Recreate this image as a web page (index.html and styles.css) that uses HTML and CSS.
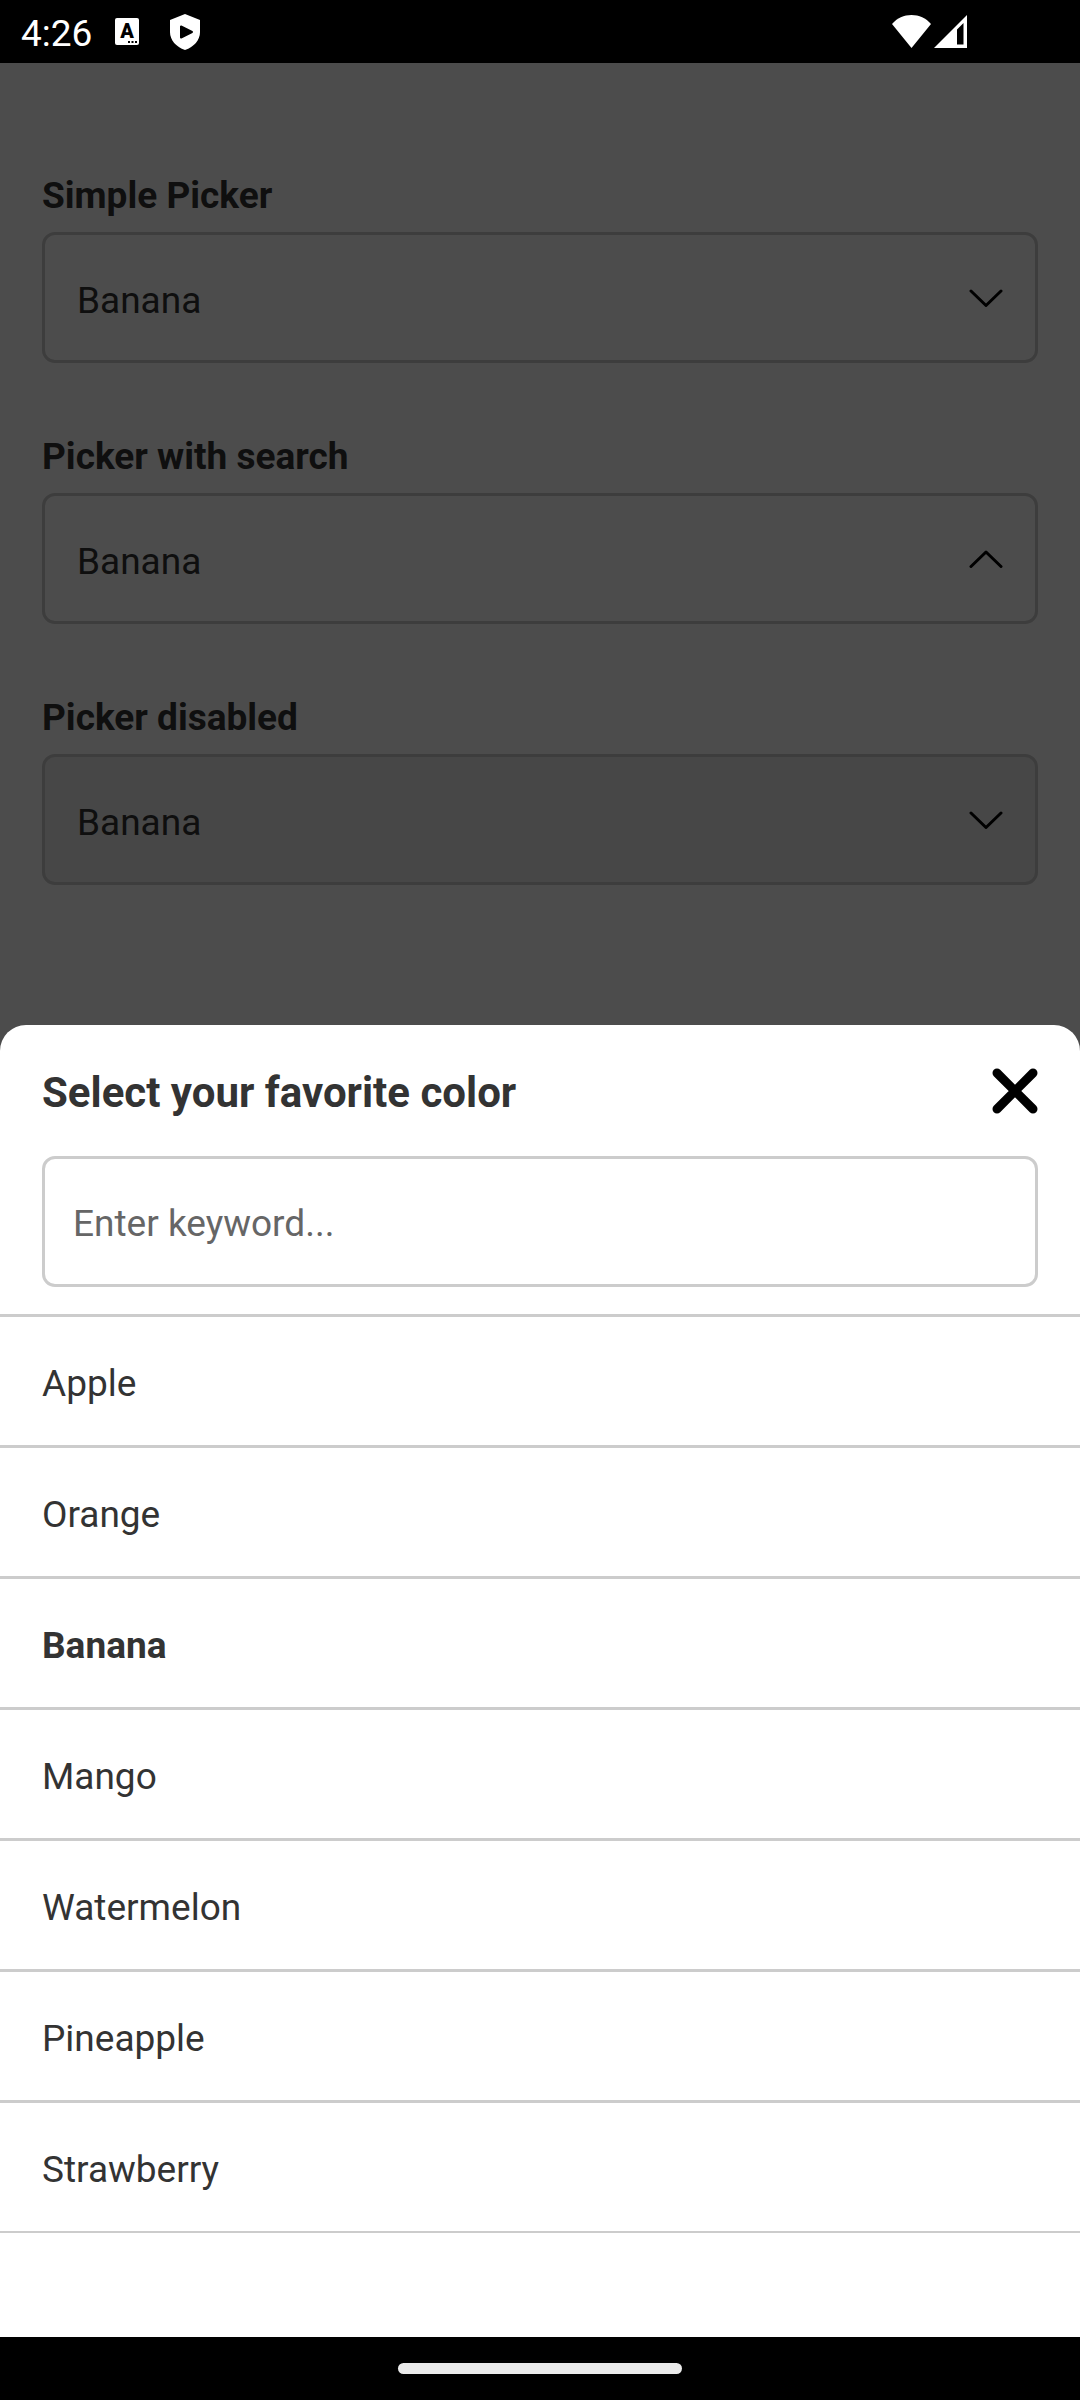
FILE: index.html
```html
<!DOCTYPE html>
<html lang="en">
<head>
<meta charset="utf-8">
<meta name="viewport" content="width=device-width, initial-scale=1">
<title>Picker</title>
<link rel="stylesheet" href="styles.css">
</head>
<body>
<header class="status-bar">
  <div class="status-left">
    <time class="clock">4:26</time>
    <svg class="notice-icon" width="24" height="27" viewBox="0 0 24 27" aria-hidden="true">
      <rect width="24" height="27" rx="2" fill="#fff"/>
      <text x="12" y="20" text-anchor="middle" class="icon-letter">A</text>
      <path d="M13 23h2v2h-2zM16.500 23h2v2h-2zM20 23h2v2h-2z" fill="#000"/>
    </svg>
    <svg class="shield-icon" width="30" height="36" viewBox="0 0 30 36" aria-hidden="true">
      <path d="M15 0 30 6v12c0 8-6 15-15 18C6 33 0 26 0 18V6z" fill="#fff"/>
      <path d="M11 12.500v11l11-5.500z" fill="#000" stroke="#000" stroke-width="2" stroke-linejoin="round"/>
    </svg>
  </div>
  <div class="status-right">
    <svg width="39" height="33" viewBox="0 0 39 33" aria-hidden="true">
      <path d="M0 9C5 3 12 0 19.500 0S34 3 39 9L19.500 33z" fill="#fff"/>
    </svg>
    <svg width="33" height="33" viewBox="0 0 33 33" aria-hidden="true">
      <path d="M33 0v33H0zM29.500 8 23 14.500V29.500h6.500z" fill="#fff" fill-rule="evenodd"/>
    </svg>
  </div>
</header>

<div class="screen">
  <main class="form">
    <div class="field">
      <label class="label" for="simple">Simple Picker</label>
      <div class="picker">
        <select id="simple" class="select"><option>Banana</option></select>
        <svg class="chevron" width="34" height="18" viewBox="0 0 34 18" aria-hidden="true"><path d="M2 2l15 14.500L32 2"/></svg>
      </div>
    </div>
    <div class="field">
      <label class="label" for="searchable">Picker with search</label>
      <div class="picker">
        <select id="searchable" class="select"><option>Banana</option></select>
        <svg class="chevron" width="34" height="18" viewBox="0 0 34 18" aria-hidden="true"><path d="M2 16.500L17 2l15 14.500"/></svg>
      </div>
    </div>
    <div class="field">
      <label class="label" for="disabled">Picker disabled</label>
      <div class="picker">
        <select id="disabled" class="select" disabled><option>Banana</option></select>
        <svg class="chevron" width="34" height="18" viewBox="0 0 34 18" aria-hidden="true"><path d="M2 2l15 14.500L32 2"/></svg>
      </div>
    </div>
  </main>
  <div class="backdrop"></div>
  <section class="sheet" role="dialog" aria-labelledby="sheet-title">
    <div class="sheet-header">
      <h2 class="sheet-title" id="sheet-title">Select your favorite color</h2>
      <button class="close" type="button" aria-label="Close">
        <svg width="46" height="46" viewBox="0 0 46 46" aria-hidden="true"><path d="M5 5l36 36M41 5L5 41"/></svg>
      </button>
    </div>
    <div class="search">
      <input class="search-input" type="text" placeholder="Enter keyword..." aria-label="Enter keyword">
    </div>
    <ul class="options">
      <li class="option"><button class="option-button" type="button">Apple</button></li>
      <li class="option"><button class="option-button" type="button">Orange</button></li>
      <li class="option"><button class="option-button selected" type="button">Banana</button></li>
      <li class="option"><button class="option-button" type="button">Mango</button></li>
      <li class="option"><button class="option-button" type="button">Watermelon</button></li>
      <li class="option"><button class="option-button" type="button">Pineapple</button></li>
      <li class="option"><button class="option-button" type="button">Strawberry</button></li>
    </ul>
  </section>
</div>

<footer class="nav-bar"><div class="home-pill"></div></footer>
</body>
</html>
```
FILE: styles.css
```css
* {
  box-sizing: border-box;
}

body {
  margin: 0;
  min-height: 100vh;
  display: flex;
  flex-direction: column;
  background: #fff;
  color: #333;
  font-family: Roboto, "Liberation Sans", sans-serif;
  font-size: 37px;
  line-height: 43px;
}

svg {
  display: block;
  flex: none;
}

button,
input,
select {
  font: inherit;
  color: inherit;
}

/* System bars */
.status-bar {
  display: flex;
  justify-content: space-between;
  align-items: center;
  height: 63px;
  padding: 0 113px 0 21px;
  background: #000;
  color: #fff;
}

.status-left {
  display: flex;
  align-items: center;
}

.clock {
  padding-top: 3px;
}

.notice-icon {
  margin-left: 23px;
}

.shield-icon {
  margin-left: 31px;
}

.icon-letter {
  font-size: 20px;
  font-weight: 900;
  fill: #000;
}

.status-right {
  display: flex;
  gap: 3px;
}

.nav-bar {
  display: flex;
  justify-content: center;
  align-items: center;
  height: 63px;
  background: #000;
}

.home-pill {
  width: 284px;
  height: 11px;
  border-radius: 6px;
  background: #ebebeb;
}

/* The form, the backdrop and the sheet share one grid cell */
.screen {
  flex: 1;
  display: grid;
}

.form,
.backdrop,
.sheet {
  grid-area: 1 / 1;
}

.form {
  display: flex;
  flex-direction: column;
  gap: 72px;
  padding: 111px 42px 0;
}

.field {
  display: flex;
  flex-direction: column;
  gap: 15px;
}

.label {
  font-weight: 700;
}

.picker {
  display: grid;
  align-items: center;
}

.select,
.chevron {
  grid-area: 1 / 1;
}

.select {
  appearance: none;
  width: 100%;
  margin: 0;
  padding: 44px 80px 38px 32px;
  border: 3px solid #ccc;
  border-radius: 13px;
  background: #fff;
  opacity: 1;
}

.select:disabled {
  background: #eee;
}

.chevron {
  justify-self: end;
  margin-right: 35px;
  pointer-events: none;
  fill: none;
  stroke: #000;
  stroke-width: 3px;
  stroke-linecap: round;
  stroke-linejoin: round;
}

.backdrop {
  background: rgba(0, 0, 0, 0.7);
  z-index: 1;
}

/* Bottom sheet */
.sheet {
  z-index: 2;
  align-self: end;
  padding: 43px 0 104px;
  border-radius: 26px 26px 0 0;
  background: #fff;
}

.sheet-header {
  display: flex;
  justify-content: space-between;
  align-items: flex-start;
  padding: 0 42px;
}

.sheet-title {
  margin: 0;
  font-size: 42px;
  line-height: 49px;
  font-weight: 700;
}

.close {
  padding: 0;
  border: 0;
  background: none;
  fill: none;
  stroke: #000;
  stroke-width: 9px;
  stroke-linecap: round;
}

.search {
  padding: 39px 42px 27px;
}

.search-input {
  display: block;
  width: 100%;
  height: 131px;
  padding: 3px 28px 0;
  border: 3px solid #ccc;
  border-radius: 13px;
  background: #fff;
}

.search-input::placeholder {
  color: #666;
  opacity: 1;
}

.options {
  margin: 0;
  padding: 0;
  list-style: none;
  border-bottom: 2px solid #ccc;
}

.option {
  border-top: 3px solid #ccc;
}

.option-button {
  display: block;
  width: 100%;
  padding: 45px 42px 40px;
  border: 0;
  background: none;
  text-align: left;
}

.selected {
  font-weight: 700;
}
```
